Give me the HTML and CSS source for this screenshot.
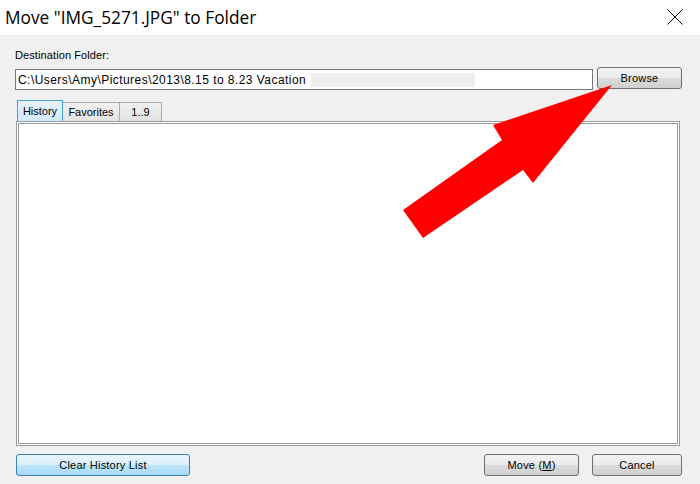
FILE: index.html
```html
<!DOCTYPE html>
<html>
<head>
<meta charset="utf-8">
<link rel="stylesheet" href="styles.css">
</head>
<body>
<div class="dialog">
  <div class="titlebar">
    <span class="title">Move "IMG_5271.JPG" to Folder</span>
    <svg class="close" width="16" height="16" viewBox="0 0 16 16"><path d="M0.5 0.5 L15.5 15.5 M15.5 0.5 L0.5 15.5" stroke="#000" stroke-width="1" fill="none"/></svg>
  </div>
  <div class="content">
    <div class="label">Destination Folder:</div>
    <div class="path-row">
      <div class="input"><span class="path">C:\Users\Amy\Pictures\2013\8.15 to 8.23 Vacation</span><span class="redact"></span></div>
      <button class="btn browse">Browse</button>
    </div>
    <div class="tabs">
      <div class="tab active">History</div>
      <div class="tab">Favorites</div>
      <div class="tab num">1..9</div>
    </div>
    <div class="panel"></div>
    <div class="footer">
      <button class="btn blue clear">Clear History List</button>
      <div class="right">
        <button class="btn move">Move (<u>M</u>)</button>
        <button class="btn cancel">Cancel</button>
      </div>
    </div>
  </div>
  <svg class="arrow" width="700" height="484" viewBox="0 0 700 484"><polygon points="612,85 493,125 502,140 403,210 423,238 523,170 533,183" fill="#ff0000"/></svg>
</div>
</body>
</html>
```
FILE: styles.css
```css
* { box-sizing: border-box; }
html, body { margin: 0; padding: 0; }
body {
  width: 700px;
  height: 484px;
  background: #f0f0f0;
  font-family: "Liberation Sans", Arial, sans-serif;
  font-size: 11px;
  color: #000;
  overflow: hidden;
}
.dialog { position: relative; width: 700px; height: 484px; }
.titlebar {
  height: 35px;
  background: #fff;
  display: flex;
  align-items: center;
  justify-content: space-between;
  padding: 0 17px 0 5px;
}
.title {
  font-family: "Open Sans", "Noto Sans", sans-serif;
  font-size: 17.3px;
  color: #000;
  margin-top: -1px;
}
.close { display: block; margin-top: -1px; }
.content { padding: 13px 18px 0 15px; }
.label { height: 20px; line-height: 14px; letter-spacing: 0.1px; }
.path-row { display: flex; align-items: flex-start; }
.input {
  flex: 1;
  height: 21px;
  margin-top: 1px;
  background: #fff;
  border: 1px solid #7a7a7a;
  display: flex;
  align-items: center;
  padding-left: 2px;
  font-size: 12px;
}
.path { white-space: nowrap; letter-spacing: 0.45px; }
.redact {
  display: inline-block;
  width: 164px;
  height: 14px;
  background: #eeeeee;
  margin-left: 5px;
}
.btn {
  font-family: "Liberation Sans", Arial, sans-serif;
  font-size: 11px;
  color: #000;
  height: 22px;
  border: 1px solid #707070;
  border-radius: 3px;
  background: linear-gradient(#f2f2f2 0%, #ebebeb 50%, #dddddd 51%, #cfcfcf 100%);
  padding: 0;
  margin: 0;
  letter-spacing: 0.2px;
}
.browse { width: 85px; margin-left: 4px; margin-top: -1px; }
.tabs { display: flex; align-items: flex-end; margin-top: 10px; height: 21px; padding-left: 2px; }
.tab {
  height: 19px;
  border: 1px solid #acacac;
  border-bottom: none;
  background: linear-gradient(#f0f0f0, #e3e3e3);
  padding: 0 5px;
  line-height: 18px;
  margin-right: -1px;
}
.tab.active {
  height: 21px;
  width: 46px;
  text-align: center;
  background: linear-gradient(#e6f2fc, #d2e8fa);
  border-color: #4a9fd8;
  position: relative;
  z-index: 1;
  padding: 0;
  line-height: 20px;
}
.tab:nth-child(2) { width: 58px; text-align: center; padding: 0; }
.tab.num { width: 43px; text-align: center; }
.panel {
  margin-left: 1px;
  height: 325px;
  width: 664px;
  background: #fff;
  border: 1px solid #9a9a9a;
  box-shadow: inset 0 0 0 1px #fff, inset 0 0 0 2px #9a9a9a;
}
.footer {
  display: flex;
  justify-content: space-between;
  margin-top: 8px;
  padding-left: 1px;
}
.btn.blue {
  border-color: #3c7fb1;
  background: linear-gradient(#eaf6fd 0%, #d9f0fc 50%, #bee6fd 51%, #a7d9f5 100%);
}
.clear { width: 174px; }
.right { display: flex; gap: 13px; }
.move { width: 95px; }
.cancel { width: 90px; }
.arrow { position: absolute; left: 0; top: 0; pointer-events: none; }
```
